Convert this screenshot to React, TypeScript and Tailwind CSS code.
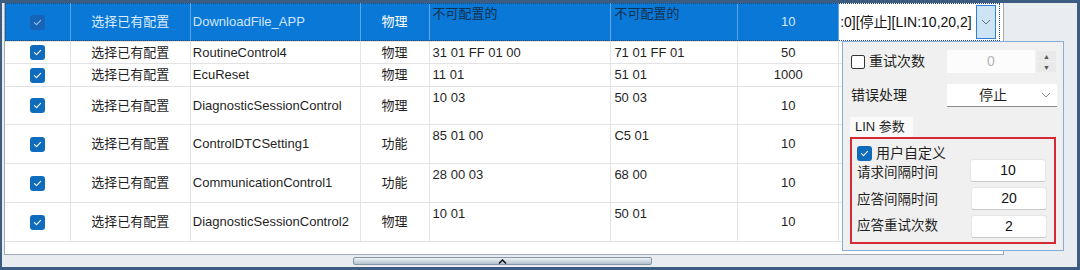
import React from "react";

type Row = {
  name: string;
  type: string;
  req: string;
  resp: string;
  t: string;
  h: string;
  sel?: boolean;
};

const rows: Row[] = [
  { name: "DownloadFile_APP", type: "物理", req: "不可配置的", resp: "不可配置的", t: "10", h: "h-[39px]", sel: true },
  { name: "RoutineControl4", type: "物理", req: "31 01 FF 01 00", resp: "71 01 FF 01", t: "50", h: "h-[22px]" },
  { name: "EcuReset", type: "物理", req: "11 01", resp: "51 01", t: "1000", h: "h-[23px]" },
  { name: "DiagnosticSessionControl", type: "物理", req: "10 03", resp: "50 03", t: "10", h: "h-[38px]" },
  { name: "ControlDTCSetting1", type: "功能", req: "85 01 00", resp: "C5 01", t: "10", h: "h-[39px]" },
  { name: "CommunicationControl1", type: "功能", req: "28 00 03", resp: "68 00", t: "10", h: "h-[39px]" },
  { name: "DiagnosticSessionControl2", type: "物理", req: "10 01", resp: "50 01", t: "10", h: "h-[39px]" },
];

function Check({ dim }: { dim?: boolean }) {
  return (
    <span
      className={`flex h-[15px] w-[15px] items-center justify-center rounded-[3px] ${
        dim ? "bg-[#1763b8]" : "bg-[#0f6cbd]"
      }`}
    >
      <svg width="11" height="11" viewBox="0 0 16 16">
        <path
          d="M3.5 8.3 L6.6 11.2 L12.5 5"
          fill="none"
          stroke={dim ? "#9cc4ee" : "#ffffff"}
          strokeWidth="1.6"
          strokeLinecap="round"
          strokeLinejoin="round"
        />
      </svg>
    </span>
  );
}

function Chevron({ color = "#5b7490" }: { color?: string }) {
  return (
    <svg width="10" height="6" viewBox="0 0 10 6">
      <path d="M1 1 L5 5 L9 1" fill="none" stroke={color} strokeWidth="1" />
    </svg>
  );
}

function TableRow({ r }: { r: Row }) {
  const line = r.sel ? "border-[#5fa6e6]" : "border-[#e3e3e3]";
  const bg = r.sel ? "bg-[#0a78d6]" : "bg-white";
  return (
    <div className={`relative flex ${r.h} border-b ${r.sel ? "border-[#e3e3e3]" : line}`}>
      <div className={`flex w-[66px] items-center justify-center border-r ${line} ${bg}`}>
        <Check dim={r.sel} />
      </div>
      <div
        className={`flex w-[120px] items-center justify-center border-r ${line} ${bg} ${
          r.sel ? "text-[#dcecff]" : "text-[#1f1f1f]"
        }`}
      >
        选择已有配置
      </div>
      <div
        className={`flex w-[170px] items-center border-r pl-[2px] ${line} ${bg} ${
          r.sel ? "text-[#cfe6ff]" : "text-[#1f1f1f]"
        }`}
      >
        {r.name}
      </div>
      <div
        className={`flex w-[69px] items-center justify-center border-r ${line} ${bg} ${
          r.sel ? "text-white" : "text-[#1f1f1f]"
        }`}
      >
        {r.type}
      </div>
      <div
        className={`w-[182px] border-r pl-[3px] pt-[2px] leading-[18px] ${line} ${bg} ${
          r.sel ? "text-[#12304f]" : "text-[#1f1f1f]"
        }`}
      >
        {r.req}
      </div>
      <div
        className={`w-[127px] border-r pl-[3px] pt-[2px] leading-[18px] ${line} ${bg} ${
          r.sel ? "text-[#12304f]" : "text-[#1f1f1f]"
        }`}
      >
        {r.resp}
      </div>
      <div
        className={`flex w-[101px] items-center justify-center border-r ${line} ${bg} ${
          r.sel ? "text-[#d5e9ff]" : "text-[#1f1f1f]"
        }`}
      >
        {r.t}
      </div>
      <div className="flex w-[164px] items-stretch bg-white">
        {r.sel && (
          <>
            <div className="flex w-[137px] items-center whitespace-nowrap pl-[1px] text-[14px] text-[#111]">
              :0][停止][LIN:10,20,2]
            </div>
            <div className="my-[2px] flex w-[20px] items-center justify-center border border-[#2f7fd6] bg-[#cde4f7]">
              <Chevron />
            </div>
          </>
        )}
      </div>
      {r.sel && (
        <div className="pointer-events-none absolute left-0 top-0 h-[38px] w-[995px] border border-dotted border-[#2b4a6b]" />
      )}
    </div>
  );
}

function Field({ value }: { value: string }) {
  return (
    <div className="flex h-[23px] w-[76px] items-center justify-center rounded-[3px] border border-[#e6e6e6] border-b-[#c9c9c9] bg-white text-[14px] text-[#111]">
      {value}
    </div>
  );
}

function Popup() {
  return (
    <div className="absolute left-[840px] top-[38px] h-[210px] w-[222px] border border-[#86acd8] bg-[#f0f0f0] pl-[8px] pt-[8px] text-[13.5px] text-[#1f1f1f]">
      <div className="flex h-[23px] items-center">
        <div className="flex w-[96px] items-center gap-[4px]">
          <span className="h-[14px] w-[14px] rounded-[2px] border border-[#333] bg-white" />
          <span className="text-[14px]">重试次数</span>
        </div>
        <div className="flex h-[23px] w-[88px] items-center justify-center bg-[#fcfcfc] text-[14px] text-[#b4b4b4]">
          0
        </div>
        <div className="ml-[2px] flex h-[21px] w-[19px] flex-col gap-[1px]">
          <div className="flex h-[10px] items-center justify-center bg-[#e9e9e9] text-[7px] leading-none text-[#555]">▲</div>
          <div className="flex h-[10px] items-center justify-center bg-[#e9e9e9] text-[7px] leading-none text-[#555]">▼</div>
        </div>
      </div>
      <div className="mt-[11px] flex h-[23px] items-center">
        <div className="w-[96px] text-[14px]">错误处理</div>
        <div className="flex h-[23px] w-[110px] items-center border-b border-[#8a8a8a] bg-white pl-[32px] pr-[6px] text-[14px]">
          <span className="flex-1">停止</span>
          <Chevron color="#8a8a8a" />
        </div>
      </div>
      <div className="ml-[-1px] mt-[10px] flex h-[20px] w-[63px] items-center bg-[#fafafa] pl-[5px] text-[13px]">
        LIN 参数
      </div>
      <div className="ml-[-1px] w-[206px] border-2 border-[#d42a35] pb-[4px] pl-[5px] pt-[7px]">
        <div className="flex h-[14px] items-center gap-[4px]">
          <Check />
          <span className="text-[14px]">用户自定义</span>
        </div>
        <div className="mt-[-1px] flex flex-col gap-[5px]">
          <div className="flex h-[23px] items-center">
            <span className="mt-[6px] w-[113px]">请求间隔时间</span>
            <Field value="10" />
          </div>
          <div className="flex h-[23px] items-center">
            <span className="mt-[3px] w-[114px]">应答间隔时间</span>
            <Field value="20" />
          </div>
          <div className="flex h-[23px] items-center">
            <span className="w-[114px]">应答重试次数</span>
            <Field value="2" />
          </div>
        </div>
      </div>
    </div>
  );
}

export default function App() {
  return (
    <div className="relative h-[270px] w-[1080px] border-b-[3px] border-l-2 border-r-[3px] border-t-[3px] border-[#3d5c82] bg-[#e9ecf0] font-['Liberation_Sans','Noto_Sans_CJK_SC',sans-serif] text-[13px]">
      <div className="pl-[2px]">
        <div className="h-[252px] w-[1000px] overflow-hidden border-b border-l border-r border-[#a3acb6] bg-white">
          {rows.map((r) => (
            <TableRow key={r.name} r={r} />
          ))}
        </div>
        <div className="h-[12px] pl-[349px] pt-[2px]">
          <div className="flex h-[8px] w-[299px] items-center justify-center rounded-[2px] border border-[#8696a6] bg-gradient-to-b from-[#eef3f7] to-[#b3c2cf]">
            <svg width="9" height="5" viewBox="0 0 9 5">
              <path d="M1 4.5 L4.5 1 L8 4.5" fill="none" stroke="#111" strokeWidth="1.5" />
            </svg>
          </div>
        </div>
      </div>
      <Popup />
    </div>
  );
}
